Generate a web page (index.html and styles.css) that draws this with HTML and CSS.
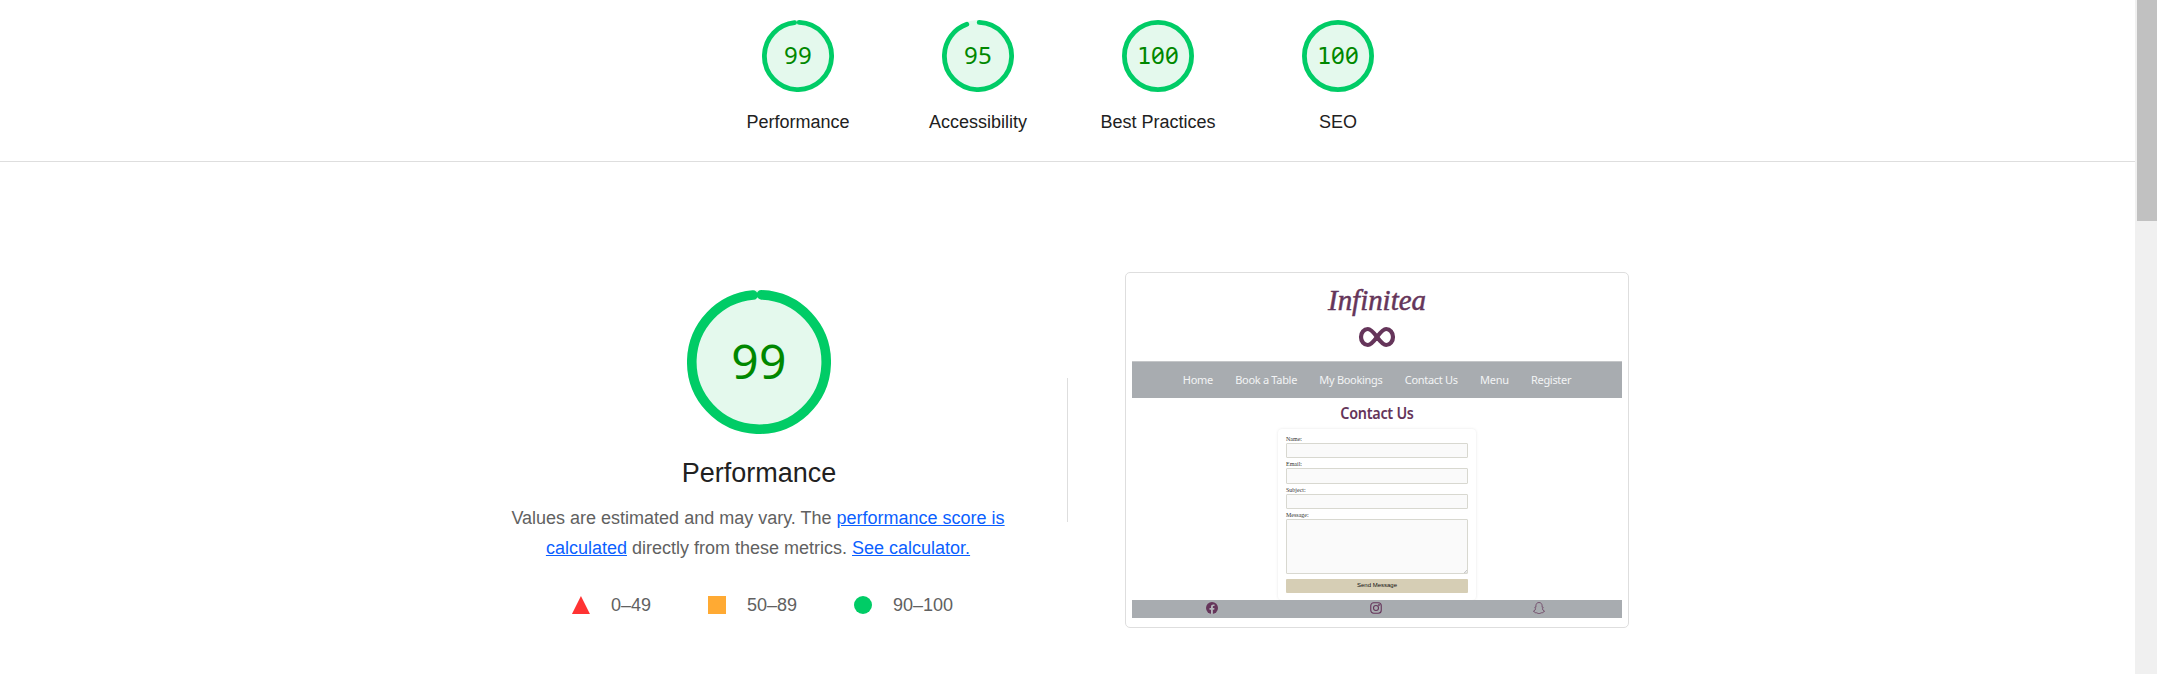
FILE: index.html
```html
<!DOCTYPE html>
<html lang="en">
<head>
<meta charset="utf-8">
<title>Performance report</title>
<link rel="stylesheet" href="styles.css">
</head>
<body>
<div class="viewport">
  <main class="report">
    <header class="scores">
      <a class="gauge">
        <div class="dial"><svg class="ring" viewBox="0 0 120 120"><circle class="base" cx="60" cy="60" r="60"/><circle class="arc" cx="60" cy="60" r="56" stroke-dasharray="343.6 351.9" transform="rotate(-87.95 60 60)"/></svg><span class="num">99</span></div>
        <span class="label">Performance</span>
      </a>
      <a class="gauge">
        <div class="dial"><svg class="ring" viewBox="0 0 120 120"><circle class="base" cx="60" cy="60" r="60"/><circle class="arc" cx="60" cy="60" r="56" stroke-dasharray="330.3 351.9" transform="rotate(-87.95 60 60)"/></svg><span class="num">95</span></div>
        <span class="label">Accessibility</span>
      </a>
      <a class="gauge">
        <div class="dial"><svg class="ring" viewBox="0 0 120 120"><circle class="base" cx="60" cy="60" r="60"/><circle class="arc" cx="60" cy="60" r="56"/></svg><span class="num"><span class="one">1</span>00</span></div>
        <span class="label">Best Practices</span>
      </a>
      <a class="gauge">
        <div class="dial"><svg class="ring" viewBox="0 0 120 120"><circle class="base" cx="60" cy="60" r="60"/><circle class="arc" cx="60" cy="60" r="56"/></svg><span class="num"><span class="one">1</span>00</span></div>
        <span class="label">SEO</span>
      </a>
    </header>
    <section class="category">
      <div class="summary">
        <div class="dial big"><svg class="ring" viewBox="0 0 120 120"><circle class="base" cx="60" cy="60" r="60"/><circle class="arc" cx="60" cy="60" r="56" stroke-dasharray="344.3 351.9" transform="rotate(-87.95 60 60)"/></svg><span class="num">99</span></div>
        <h1 class="title">Performance</h1>
        <p class="desc">Values are estimated and may vary. The <a class="link">performance score is<br>calculated</a> directly from these metrics. <a class="link">See calculator.</a></p>
        <div class="legend">
          <span class="range"><i class="mark fail"></i>0–49</span>
          <span class="range"><i class="mark average"></i>50–89</span>
          <span class="range"><i class="mark pass"></i>90–100</span>
        </div>
      </div>
      <div class="divider"></div>
      <div class="frame">
        <div class="shot">
          <div class="brand">
            <svg class="wordmark" viewBox="0 0 104 36"><text x="3" y="25.500" textLength="98" lengthAdjust="spacingAndGlyphs">Infinitea</text></svg>
            <svg class="infinity" viewBox="0 0 36 20"><path d="M18 10C14 4.500 11.500 2 8.800 2C5 2 2 5.500 2 10S5 18 8.800 18C11.500 18 14 15.500 18 10S24.500 2 27.200 2C31 2 34 5.500 34 10S31 18 27.200 18C24.500 18 22 15.500 18 10Z"/></svg>
          </div>
          <nav class="nav">
            <span>Home</span><span>Book a Table</span><span>My Bookings</span><span>Contact Us</span><span>Menu</span><span>Register</span>
          </nav>
          <h2 class="heading">Contact Us</h2>
          <div class="form">
            <label>Name:</label><div class="field"></div>
            <label>Email:</label><div class="field"></div>
            <label>Subject:</label><div class="field"></div>
            <label>Message:</label><div class="field area"><svg viewBox="0 0 4 4"><path d="M0 4L4 0M2 4L4 2"/></svg></div>
            <div class="send">Send Message</div>
          </div>
          <footer class="social">
            <svg class="fb" viewBox="0 0 24 24"><circle cx="12" cy="12" r="12"/><path d="M10 24v-8.500H7V12h3V9.400C10 6.400 11.800 4.800 14.500 4.800c1.300 0 2.600.2 2.600.2v2.900h-1.500c-1.500 0-1.900.9-1.900 1.800V12h3.200l-.5 3.500h-2.700V24z"/></svg>
            <svg class="line" viewBox="0 0 24 24"><rect x="1.500" y="1.500" width="21" height="21" rx="6"/><circle cx="12" cy="12" r="5"/><circle cx="18" cy="6" r=".7"/></svg>
            <svg class="line thin" viewBox="0 0 24 24"><path d="M12 1C8 1 5.800 4 5.800 7.500v3c-.8.300-2-.5-2.300.5s2 1.500 1.800 2.800C4.700 16 3 17.500 1 18c0 1.800 2.500 1.700 3 2.200.4.600 0 1.300 1 1.300s2-.3 3.200.4C9.500 22.800 10.500 23.500 12 23.500s2.500-.7 3.800-1.600c1.200-.7 2.200-.4 3.200-.4s.6-.7 1-1.300c.5-.5 3-.4 3-2.200-2-.5-3.700-2-4.300-4.200-.2-1.300 2.100-1.800 1.800-2.800s-1.500-.2-2.300-.5v-3C18.200 4 16 1 12 1Z"/></svg>
          </footer>
        </div>
      </div>
    </section>
  </main>
  <aside class="scrollbar"><div class="thumb"></div></aside>
</div>
</body>
</html>
```
FILE: styles.css
```css
* { box-sizing: border-box; }
body { margin: 0; background: #fff; font-family: "Liberation Sans", Arial, sans-serif; font-size: 18px; color: #212121; }
.viewport { display: flex; width: 2157px; height: 674px; overflow: hidden; }
.report { flex: 1; }
.scrollbar { width: 22px; padding-left: 2px; background: #f0f0f0; }
.thumb { height: 221px; background: #c1c1c1; }

.scores { display: flex; height: 162px; padding: 20px 0 0 708px; border-bottom: 1px solid #dedede; }
.gauge { display: flex; flex-direction: column; align-items: center; width: 180px; }
.label { margin-top: 20px; line-height: 20px; }
.dial { display: grid; place-items: center; width: 72px; height: 72px; font: 24px/32px "Noto Sans", sans-serif; color: #080; }
.dial > * { grid-area: 1 / 1; }
.ring { display: block; width: 100%; height: 100%; }
.base { fill: #e4f9ed; }
.arc { fill: none; stroke: #0c6; stroke-width: 8; stroke-linecap: round; }
.num { margin-bottom: 3px; letter-spacing: .3px; font-feature-settings: "zero"; }
.one { font-family: "DejaVu Sans Mono", monospace; font-size: 23.5px; letter-spacing: -.2px; line-height: 1; }
.big { width: 144px; height: 144px; font-size: 48px; line-height: 64px; }

.category { display: flex; }
.summary { display: flex; flex-direction: column; align-items: center; width: 500px; margin: 128px 0 0 509px; }
.title { margin: 21px 0 0; font-size: 27px; font-weight: 400; line-height: 36px; }
.desc { margin: 12px 2px 0 0; line-height: 30px; color: #616161; text-align: center; white-space: nowrap; }
.link { color: #0b5fff; text-decoration: underline; }
.legend { display: flex; gap: 57px; margin: 32px 0 0 7px; color: #616161; line-height: 20px; }
.range { display: flex; align-items: center; gap: 21px; }
.mark { width: 18px; height: 18px; }
.fail { background: #f33; clip-path: polygon(50% 0, 100% 100%, 0 100%); }
.average { background: #fa3; }
.pass { background: #0c6; border-radius: 50%; }
.divider { width: 1px; height: 144px; margin: 216px 57px 0 58px; background: #dedede; }

.frame { width: 504px; height: 356px; margin-top: 110px; padding: 6px; border: 1px solid #dedede; border-radius: 5px; }
.shot { width: 490px; }
.brand { display: flex; flex-direction: column; align-items: center; height: 82px; padding-top: 5px; }
.wordmark { width: 104px; height: 36px; font: italic 29px "Liberation Serif", serif; fill: #65355a; stroke: #65355a; stroke-width: .5; }
.infinity { width: 36px; height: 20px; margin-top: 7px; overflow: visible; fill: none; stroke: #65355a; stroke-width: 4.200; }
.nav { display: flex; justify-content: center; gap: 22.300px; height: 37px; border-top: 1px solid #c4c6c8; background: #a8acb0; color: #f3f4f5; font: 11px/36px "Noto Sans", sans-serif; letter-spacing: -.3px; white-space: nowrap; }
.heading { margin: 4px 0 0; color: #65355a; font: 600 16.500px/22px "Noto Sans", sans-serif; letter-spacing: -.3px; text-align: center; transform: scaleX(.87); }
.form { width: 198px; height: 171px; margin: 5px auto 0; padding: 5.500px 8px 0; border-radius: 4px; box-shadow: 0 0 3px rgba(0, 0, 0, .1); }
.form label { display: block; height: 8px; color: #333; font: 6px/8px "Liberation Serif", serif; }
.field { height: 15.500px; margin-bottom: 2px; border: 1px solid #d8d8d0; border-radius: 1px; background: #fafafa; }
.area { display: flex; align-items: flex-end; justify-content: flex-end; height: 55px; margin-bottom: 5px; }
.area svg { width: 3px; height: 3px; stroke: #777; stroke-width: .5; }
.send { height: 13.500px; border-radius: 1px; background: #d6ceb5; color: #111; font: 6px/13.500px "Liberation Sans", sans-serif; text-align: center; }
.social { display: flex; gap: 151.500px; height: 18px; padding: 2px 0 0 74px; background: #a8acb0; }
.social svg { width: 12px; height: 12px; }
.fb circle { fill: #65355a; }
.fb path { fill: #b4b5ba; }
.line { fill: none; stroke: #65355a; stroke-width: 2.200; }
.thin { stroke-width: 1.500; }
```
